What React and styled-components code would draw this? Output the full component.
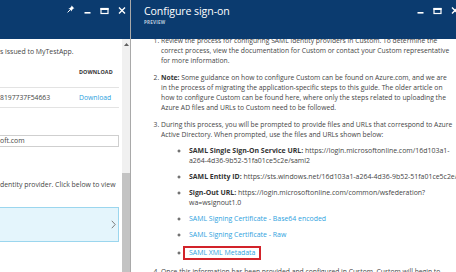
import React from 'react';
import styled, { createGlobalStyle } from 'styled-components';

const GlobalStyle = createGlobalStyle`
    html, body {
        margin: 0;
        padding: 0;
        overflow: hidden;
        background: #ffffff;
    }
`;

const Screen = styled.div`
    display: flex;
    width: 456px;
    height: 272px;
    overflow: hidden;
    font-family: "Open Sans", "Noto Sans", sans-serif;
    color: #454545;
`;

const Blade = styled.section`
    display: flex;
    flex-direction: column;
    width: ${props => props.width || 'auto'};
    flex: ${props => props.grow ? '1' : 'none'};
    border-right: ${props => props.edge};
    height: 100%;
`;

const BladeHeader = styled.header`
    display: flex;
    align-items: flex-start;
    height: 39px;
    flex: none;
    background: #0b3b6f;
    padding-right: ${props => props.padRight || 0}px;
`;

const TitleBlock = styled.div`
    padding: 5px 0 0 13px;
    color: #ffffff;
`;

const Title = styled.h1`
    margin: 0;
    font-size: 10.6px;
    line-height: 13px;
    font-weight: 400;
    letter-spacing: -0.1px;
`;

const Subtitle = styled.div`
    font-size: 4.6px;
    font-weight: 700;
    letter-spacing: 0.2px;
    line-height: 6px;
    margin-top: 1px;
    color: #b8c8dc;
`;

const IconRow = styled.div`
    display: flex;
    margin-left: auto;
    padding-top: 5px;
`;

const IconButton = styled.span`
    display: flex;
    justify-content: center;
    width: 17px;
    height: 10px;
    color: #ffffff;
`;

const BladeBody = styled.div`
    display: flex;
    flex: 1;
    min-height: 0;
    overflow: hidden;
`;

const Content = styled.div`
    flex: 1;
    min-width: 0;
    overflow: hidden;
    padding-right: ${props => props.padRight || 0}px;
`;

const Scrollbar = styled.div`
    display: flex;
    flex-direction: column;
    width: 8px;
    flex: none;
    background: #f0f0f0;
`;

const ScrollArrow = styled.div`
    height: 12px;
    display: flex;
    justify-content: center;
    padding-top: 4px;
    box-sizing: border-box;
`;

const Track = styled.div`
    height: ${props => props.h}px;
    flex: ${props => props.fill ? '1' : 'none'};
`;

const Thumb = styled.div`
    height: ${props => props.h}px;
    flex: ${props => props.fill ? '1' : 'none'};
    background: #c3c3c3;
`;

/* left blade */

const LeftText = styled.p`
    margin: ${props => props.m || '0'};
    font-size: 6.9px;
    line-height: 10px;
    white-space: nowrap;
`;

const GridRow = styled.div`
    display: grid;
    grid-template-columns: 79px 1fr;
    align-items: center;
    height: ${props => props.h}px;
    border-bottom: ${props => props.line ? '1px solid #e3e3e3' : 'none'};
    font-size: 6.8px;
`;

const ColHead = styled.span`
    grid-column: 2;
    font-size: 5.4px;
    font-weight: 700;
    color: #333;
    letter-spacing: 0.1px;
`;

const Link = styled.a`
    color: #2ea2de;
    text-decoration: none;
`;

const Field = styled.div`
    margin-top: 27px;
    height: 12px;
    border: 1px solid #cfcfcf;
    border-left: none;
    box-sizing: border-box;
    font-size: 6.9px;
    line-height: 10px;
`;

const PickBox = styled.div`
    display: flex;
    justify-content: flex-end;
    align-items: center;
    height: 35px;
    margin-top: 17px;
    background: #e4f5fc;
    border: 1px solid #9bd6ee;
    border-left: none;
    box-sizing: border-box;
    padding-right: 2px;
`;

/* right blade */

const Steps = styled.ol`
    margin: -3px 0 0 0;
    padding: 0 0 0 30px;
    font-size: 6.75px;
    line-height: 10px;
    white-space: nowrap;
`;

const Step = styled.li`
    margin-top: ${props => props.first ? 0 : 7}px;
    b { color: #333; }
`;

const Bullets = styled.ul`
    list-style: circle;
    margin: 6px 0 0 0;
    padding-left: 28px;
    font-size: 6.95px;
`;

const Bullet = styled.li`
    margin-top: ${props => props.first ? 0 : 6}px;
    b { color: #333; }
`;

const Boxed = styled.span`
    display: inline-block;
    border: 2px solid #d2232a;
    padding: 0 4px;
    margin-left: -6px;
    line-height: 10px;
`;

const Pin = () => (
    <svg width="8" height="8" viewBox="0 0 8 8">
        <path d="M4.6 0.6 L7.4 3.4 L6.4 3.6 L4.8 5.2 L4.9 6.6 L1.4 3.1 L2.8 3.2 L4.4 1.6 Z" fill="#fff" />
        <path d="M3.1 4.9 L0.6 7.4" stroke="#fff" strokeWidth="1" />
    </svg>
);

const Minimize = () => (
    <svg width="7" height="10" viewBox="0 0 7 10">
        <rect x="0.5" y="7" width="6" height="1.6" fill="#fff" />
    </svg>
);

const Maximize = () => (
    <svg width="9" height="10" viewBox="0 0 9 10">
        <rect x="1" y="3.5" width="7" height="5" fill="none" stroke="#fff" strokeWidth="1.2" />
        <rect x="0.5" y="3" width="8" height="2" fill="#fff" />
    </svg>
);

const Close = () => (
    <svg width="8" height="10" viewBox="0 0 8 10">
        <path d="M1 2.5 L7 8.5 M7 2.5 L1 8.5" stroke="#fff" strokeWidth="1.4" />
    </svg>
);

const UpArrow = () => (
    <svg width="5" height="3" viewBox="0 0 5 3">
        <path d="M0 3 L2.5 0 L5 3 Z" fill="#606060" />
    </svg>
);

const Chevron = () => (
    <svg width="5" height="9" viewBox="0 0 5 9">
        <path d="M0.8 0.8 L4.2 4.5 L0.8 8.2" fill="none" stroke="#6e6e6e" strokeWidth="0.9" />
    </svg>
);

const App = () => {
    return (
        <>
        <GlobalStyle />
        <Screen>
            <Blade width="130px" edge="1px solid #a9a9a9">
                <BladeHeader>
                    <IconRow>
                        <IconButton><Pin /></IconButton>
                        <IconButton><Minimize /></IconButton>
                        <IconButton><Maximize /></IconButton>
                        <IconButton><Close /></IconButton>
                    </IconRow>
                </BladeHeader>
                <BladeBody>
                    <Content padRight={3}>
                        <LeftText m="8px 0 0 0">s issued to MyTestApp.</LeftText>
                        <GridRow h={30} line>
                            <ColHead>DOWNLOAD</ColHead>
                        </GridRow>
                        <GridRow h={19} line>
                            <span>8197737F54663</span>
                            <Link>Download</Link>
                        </GridRow>
                        <Field>oft.com</Field>
                        <LeftText m="33px 0 0 0">dentity provider. Click below to view</LeftText>
                        <PickBox><Chevron /></PickBox>
                    </Content>
                    <Scrollbar>
                        <ScrollArrow><UpArrow /></ScrollArrow>
                        <Track h={122} />
                        <Thumb fill />
                    </Scrollbar>
                </BladeBody>
            </Blade>
            <Blade grow edge="2px solid #0b3b6f">
                <BladeHeader padRight={2}>
                    <TitleBlock>
                        <Title>Configure sign-on</Title>
                        <Subtitle>PREVIEW</Subtitle>
                    </TitleBlock>
                    <IconRow>
                        <IconButton><Minimize /></IconButton>
                        <IconButton><Maximize /></IconButton>
                        <IconButton><Close /></IconButton>
                    </IconRow>
                </BladeHeader>
                <BladeBody>
                    <Content>
                        <Steps>
                            <Step first>
                                Review the process for configuring SAML identity providers in Custom. To determine the<br />
                                correct process, view the documentation for Custom or contact your Custom representative<br />
                                for more information.
                            </Step>
                            <Step>
                                <b>Note:</b> Some guidance on how to configure Custom can be found on Azure.com, and we are<br />
                                in the process of migrating the application-specific steps to this guide. The older article on<br />
                                how to configure Custom can be found here, where only the steps related to uploading the<br />
                                Azure AD files and URLs to Custom need to be followed.
                            </Step>
                            <Step>
                                During this process, you will be prompted to provide files and URLs that correspond to Azure<br />
                                Active Directory. When prompted, use the files and URLs shown below:
                                <Bullets>
                                    <Bullet first>
                                        <b>SAML Single Sign-On Service URL:</b> https://login.microsoftonline.com/16d103a1-<br />
                                        a264-4d36-9b52-51fa01ce5c2e/saml2
                                    </Bullet>
                                    <Bullet>
                                        <b>SAML Entity ID:</b> https://sts.windows.net/16d103a1-a264-4d36-9b52-51fa01ce5c2e/
                                    </Bullet>
                                    <Bullet>
                                        <b>Sign-Out URL:</b> https://login.microsoftonline.com/common/wsfederation?<br />
                                        wa=wsignout1.0
                                    </Bullet>
                                    <Bullet><Link>SAML Signing Certificate - Base64 encoded</Link></Bullet>
                                    <Bullet><Link>SAML Signing Certificate - Raw</Link></Bullet>
                                    <Bullet><Boxed><Link>SAML XML Metadata</Link></Boxed></Bullet>
                                </Bullets>
                            </Step>
                            <Step>
                                Once this information has been provided and configured in Custom, Custom will begin to
                            </Step>
                        </Steps>
                    </Content>
                    <Scrollbar>
                        <ScrollArrow><UpArrow /></ScrollArrow>
                        <Track h={92} />
                        <Thumb h={85} />
                        <Track fill />
                    </Scrollbar>
                </BladeBody>
            </Blade>
        </Screen>
        </>
    );
};

export default App;
